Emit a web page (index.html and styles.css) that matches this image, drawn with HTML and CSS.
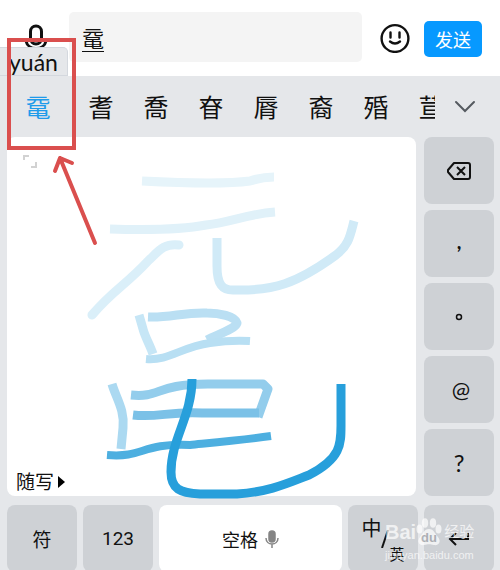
FILE: index.html
```html
<!DOCTYPE html>
<html lang="zh-CN">
<head>
<meta charset="utf-8">
<meta name="viewport" content="width=device-width, initial-scale=1">
<title>手写输入</title>
<link rel="stylesheet" href="styles.css">
</head>
<body>
<main class="screen">
  <form class="composer">
    <button class="icon-button voice" type="button" aria-label="语音">
      <svg width="30" height="32" viewBox="0 0 30 32" fill="none" stroke="#111" stroke-width="3" stroke-linecap="round"><rect x="9.500" y="5" width="11" height="18" rx="5.500"/><path d="M5 20c2 10 18 10 20 0"/></svg>
    </button>
    <input class="message" type="text" value="鼋" aria-label="消息">
    <button class="icon-button" type="button" aria-label="表情">
      <svg width="30" height="32" viewBox="0 0 30 32" fill="none" stroke="#111" stroke-width="2.4"><circle cx="15" cy="17.500" r="13.400"/><path d="M10.500 11.500v5M19.500 11.500v5M10 20.500q5 4 10 0" stroke-linecap="round"/></svg>
    </button>
    <button class="send" type="button">发送</button>
  </form>

  <section class="keyboard">
    <span class="pinyin">yuán</span>
    <div class="candidates">
      <div class="candidate-list">
        <button class="candidate active" type="button">鼋</button>
        <button class="candidate" type="button">耆</button>
        <button class="candidate" type="button">喬</button>
        <button class="candidate" type="button">眘</button>
        <button class="candidate" type="button">脣</button>
        <button class="candidate" type="button">裔</button>
        <button class="candidate" type="button">殙</button>
        <button class="candidate" type="button">荁</button>
      </div>
      <button class="icon-button more" type="button" aria-label="更多候选">
        <svg width="22" height="14" viewBox="0 0 22 14" fill="none" stroke="#555a60" stroke-width="2" stroke-linecap="round"><path d="M2 2l9 9 9-9"/></svg>
      </button>
    </div>

    <div class="writing">
      <div class="pad">
        <svg class="expand" width="16" height="14" viewBox="0 0 16 14" fill="none" stroke="#d2d2d2" stroke-width="2"><path d="M2 6V2h5M14 8v5H9"/></svg>
        <svg class="ink" viewBox="0 0 409 359" aria-hidden="true">
          <g transform="translate(-7 -137)" fill="none" stroke-width="9" stroke-linejoin="round">
            <path stroke="#e6f4fa" d="M142 181Q220 185 250 181Q262 177 274 177"/>
            <path stroke="#e0f1f9" d="M110 229Q175 231 206 225C232 222 247 214 275 212"/>
            <path stroke="#daeff9" stroke-linecap="round" d="M179 245C163 243 158 252 148 261C127 284 112 291 92 315"/>
            <path stroke="#d0eaf7" d="M217 238L217 266C217 284 222 291 235 290C273 291 296 284 336 255C349 245 350 236 354 221"/>
            <path stroke="#c6e6f6" d="M139 315L143 329C145 337 150 345 153 354"/>
            <path stroke="#badff3" d="M148 317C170 318 184 312 207 313C219 313 235 316 237 323C235 329 219 334 207 340"/>
            <path stroke="#b8dff3" stroke-width="8" d="M146 359C169 361 181 347 210 343C223 341 235 340 250 341"/>
            <path stroke="#abd9f1" d="M112 384C116 398 125 410 123 428L121 449"/>
            <path stroke="#93cdec" d="M131 395C161 398 155 384 208 384H263L268 389L258 417"/>
            <path stroke="#7bc1e7" d="M133 415C157 418 170 411 202 413H259"/>
            <path stroke="#4dafe0" stroke-width="8" d="M107 455C145 458 140 443 190 445C220 442 242 440 271 436"/>
            <path stroke="#279fdb" d="M192 379C192 416 171 439 171 472C171 489 180 493 200 494H237C269 492 288 483 309 475C342 458 341 443 341 424V384"/>
          </g>
        </svg>
        <button class="mode" type="button">随写<svg width="7" height="12" viewBox="0 0 7 12"><path d="M0 0l7 6-7 6z"/></svg></button>
      </div>
      <div class="side-keys">
        <button class="key" type="button" aria-label="删除"><svg width="26" height="20" viewBox="0 0 26 20" fill="none" stroke="#111" stroke-width="2" stroke-linejoin="round"><path d="M8 2h14q2 0 2 2v12q0 2-2 2H8l-6-7v-2zM11 6l8 8m0-8l-8 8"/></svg></button>
        <button class="key comma" type="button">,</button>
        <button class="key" type="button" aria-label="句号"><svg width="8" height="8" viewBox="0 0 8 8" fill="none" stroke="#111" stroke-width="1.5"><circle cx="4" cy="4" r="2.500"/></svg></button>
        <button class="key at" type="button">@</button>
        <button class="key" type="button">?</button>
      </div>
    </div>

    <div class="bottom-keys">
      <button class="key" type="button">符</button>
      <button class="key digits" type="button">123</button>
      <button class="key space" type="button">空格<svg width="14" height="18" viewBox="0 0 14 18" fill="none" stroke="#858585" stroke-width="1.500"><rect x="4" y="1" width="6" height="11" rx="3" fill="#858585"/><path d="M1 8c0 8 12 8 12 0M7 14v4"/></svg></button>
      <button class="key language" type="button"><span class="zh">中</span><svg width="8" height="18" viewBox="0 0 8 18" fill="none" stroke="#111" stroke-width="2"><path d="M7 0L1 18"/></svg><span class="en">英</span></button>
      <button class="key" type="button" aria-label="换行"><svg width="22" height="16" viewBox="0 0 22 16" fill="none" stroke="#111" stroke-width="2"><path d="M8 2L2 8l6 6M2 8h18V2"/></svg></button>
    </div>
  </section>

  <div class="watermark">
    <div class="brand"><span class="brand-name">Bai</span><svg width="26" height="28" viewBox="0 0 26 28"><g fill="#fff"><ellipse cx="3.500" cy="11" rx="3" ry="4.500"/><ellipse cx="9" cy="5" rx="3.200" ry="4.700"/><ellipse cx="17" cy="5" rx="3.200" ry="4.700"/><ellipse cx="22.500" cy="11" rx="3" ry="4.500"/><path d="M13 11c5 0 6 5 9 8 4 5 0 9-4 8-4-1-6-1-10 0-4 1-8-3-4-8 3-3 4-8 9-8z"/></g><text class="paw-text" x="13" y="24" text-anchor="middle">du</text></svg><span class="brand-cn">经验</span></div>
    <div class="site">jingyan.baidu.com</div>
  </div>

  <svg class="callout" width="100" height="215" viewBox="0 0 100 215" fill="none" stroke="#da4f4e" stroke-width="4" aria-hidden="true"><rect x="9" y="5" width="65" height="108"/><path stroke-linecap="round" stroke-linejoin="round" d="M95 208L60 123M55 136l5-13 12 5"/></svg>
</main>
</body>
</html>
```
FILE: styles.css
```css
* { box-sizing: border-box; }

body {
  margin: 0;
  background: #fff;
  color: #111;
  font-family: "Noto Sans", "Noto Sans CJK SC", sans-serif;
}

button, input {
  border: 0;
  padding: 0;
  font: inherit;
  color: inherit;
}

button { background: none; }

svg { display: block; flex: none; }

.screen {
  position: relative;
  height: 100vh;
  overflow: hidden;
  display: flex;
  flex-direction: column;
}

.composer {
  display: flex;
  align-items: center;
  padding: 12px 18px 14px 21px;
}

.message {
  flex: 1;
  min-width: 0;
  height: 50px;
  margin: 0 18px;
  padding: 0 13px;
  border-radius: 5px;
  background: #f4f4f4;
  font-size: 22px;
  text-decoration: underline 1px;
  text-underline-offset: 4px;
}

.send {
  margin-top: 4px;
  margin-left: 14px;
  width: 58px;
  height: 36px;
  border-radius: 5px;
  background: #0799ff;
  color: #fff;
  font-size: 18px;
}

.keyboard {
  position: relative;
  flex: 1;
  background: #e5e7ea;
}

.pinyin {
  position: absolute;
  left: 0;
  bottom: 100%;
  width: 68px;
  height: 29px;
  padding-left: 9px;
  border: 1px solid #d4d8de;
  border-left: 0;
  border-radius: 0 5px 0 0;
  background: #e5e7ea;
  font-family: Lato, sans-serif;
  font-size: 23px;
  line-height: 28px;
}

.candidates {
  display: flex;
  align-items: center;
  height: 61px;
  padding-right: 24px;
}

.candidate-list {
  flex: 1;
  min-width: 0;
  display: flex;
  gap: 29px;
  margin-right: 19px;
  padding-left: 25px;
  overflow: hidden;
}

.candidate {
  flex: none;
  width: 26px;
  font-size: 25px;
  line-height: 36px;
}

.candidate.active { color: #1e9bea; margin-right: 8px; }

.writing {
  display: flex;
  gap: 8px;
  padding: 0 6px 0 7px;
}

.pad {
  position: relative;
  flex: 1;
  border-radius: 8px;
  background: #fff;
}

.expand { position: absolute; left: 15px; top: 17px; }

.ink {
  position: absolute;
  inset: 0;
  width: 100%;
  height: 100%;
  overflow: visible;
}

.mode {
  position: absolute;
  left: 9px;
  bottom: 0;
  display: flex;
  align-items: center;
  gap: 4px;
  font-size: 19px;
  line-height: 28px;
}

.side-keys {
  width: 70px;
  display: flex;
  flex-direction: column;
  gap: 6px;
}

.key {
  display: flex;
  align-items: center;
  justify-content: center;
  height: 67px;
  border-radius: 8px;
  background: #ced1d5;
  font-size: 19px;
}

.side-keys .key { font-family: Lato, sans-serif; font-size: 24px; }
.side-keys .at { padding-left: 4px; font-size: 22px; }
.side-keys .comma { padding-bottom: 6px; font-weight: 700; font-size: 20px; }
.key.digits { font-family: Roboto, sans-serif; }

.bottom-keys {
  display: grid;
  grid-template-columns: 70fr 70fr 183fr 70fr 70fr;
  gap: 6px;
  padding: 9px 6px 0 7px;
}

.bottom-keys .key { min-width: 0; }

.bottom-keys .space {
  gap: 7px;
  background: #fff;
  font-size: 18px;
}

.zh { align-self: flex-start; padding-top: 10px; font-size: 20px; line-height: 28px; }
.en { align-self: flex-end; padding-bottom: 8px; font-size: 15px; line-height: 20px; }

.watermark {
  position: absolute;
  left: 385px;
  top: 516px;
  color: #fff;
  opacity: 0.7;
  font-family: "Liberation Sans", "Noto Sans CJK SC", sans-serif;
}

.brand { display: flex; align-items: center; font-size: 20px; line-height: 32px; }
.brand-name { font-weight: 700; }
.brand-cn { margin-left: 2px; font-size: 15px; }
.paw-text { fill: #9da1a6; font-size: 13px; font-weight: 700; }
.site { font-size: 11px; line-height: 14px; }

.callout { position: absolute; left: 0; top: 35px; }
```
